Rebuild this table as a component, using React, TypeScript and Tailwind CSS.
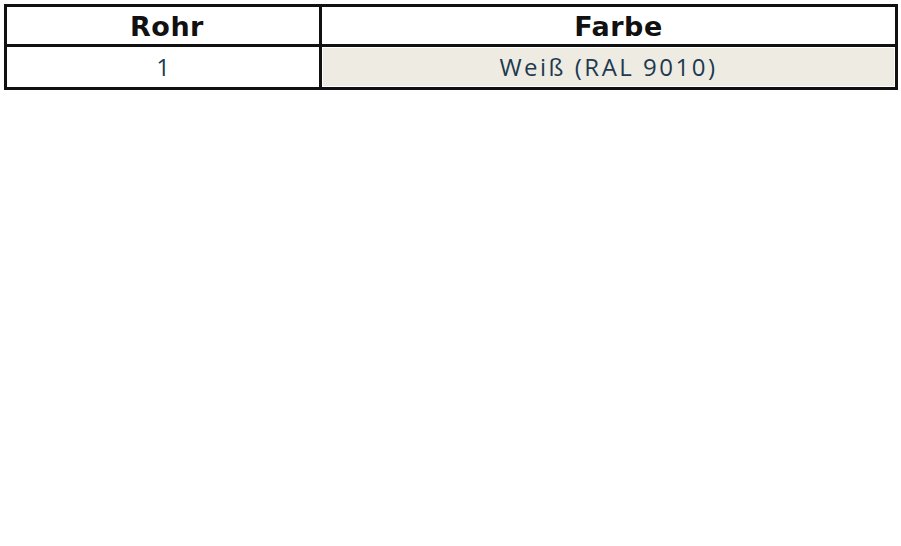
import React from "react";

export default function App() {
  return (
    <div className="w-[901px] h-[546px] bg-white pl-[4px] pt-[4px]">
      <div className="w-[894px] border-[3px] border-[#111111] bg-white">
        <div className="grid grid-cols-[312px_1fr] border-b-[3px] border-[#111111] h-[40px]">
          <div className="flex items-center justify-center pl-[8px] text-[27px] font-bold tracking-[0.5px] text-[#111111] leading-none pt-[1px]" style={{ fontFamily: '"DejaVu Sans", "Noto Sans", sans-serif' }}>
            Rohr
          </div>
          <div className="flex items-center justify-center pl-[20px] border-l-[3px] border-[#111111] text-[27px] font-bold tracking-[0.5px] text-[#111111] leading-none pt-[1px]" style={{ fontFamily: '"DejaVu Sans", "Noto Sans", sans-serif' }}>
            Farbe
          </div>
        </div>
        <div className="grid grid-cols-[312px_1fr] h-[40px]">
          <div className="flex items-center justify-center text-[24px] text-[#1d3a50] leading-none" style={{ fontFamily: '"Open Sans", "Noto Sans", sans-serif' }}>
            1
          </div>
          <div className="border-l-[3px] border-[#111111] p-[1px]">
            <div className="h-full bg-[#eeebe2] flex items-center justify-center text-[24px] tracking-[2.5px] text-[#1d3a50] leading-none" style={{ fontFamily: '"Open Sans", "Noto Sans", sans-serif' }}>
              Weiß (RAL 9010)
            </div>
          </div>
        </div>
      </div>
    </div>
  );
}
